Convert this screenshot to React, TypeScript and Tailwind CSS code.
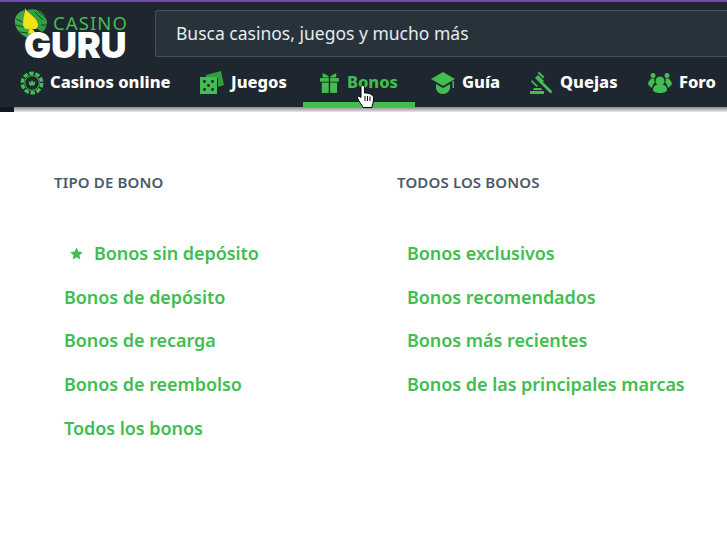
const left = ['Bonos de depósito', 'Bonos de recarga', 'Bonos de reembolso', 'Todos los bonos'];
const right = ['Bonos exclusivos', 'Bonos recomendados', 'Bonos más recientes', 'Bonos de las principales marcas'];

function Logo() {
  return (
    <div className="relative w-[128px] h-[56px] shrink-0">
      <svg className="absolute left-[2px] top-[-2px]" width="36" height="34" viewBox="0 0 36 34">
        <path d="M13 2 C22 -1 32 4 33 14 C33 19 31 22 28 24 L22 20 Z" fill="#2f9e3e" />
        <path d="M21 4 L29 12 M24 3 L32 10 M27 17 L33 17" stroke="#1e262f" strokeWidth="0.8" />
        <path d="M10 2 C4 4 0 9 1 15 C2 23 8 28 16 31 L18 22 L12 10 Z" fill="#3aa949" />
        <path d="M2 11 L11 15 M2 17 L13 20 M5 24 L14 25" stroke="#1e262f" strokeWidth="0.8" />
        <path d="M11 0 C13 5 24 10 24 17 C24 21 20 22 18 20.500 L22 25.500 L14 25.500 L15.500 20.500 C12 22 9 20 9 16 C9 10 11 6 11 0 Z" fill="#f1e317" />
      </svg>
      <span className="absolute left-[41px] top-[6px] text-[18.500px] leading-[14px] tracking-[1.100px] text-[#42bd4f]">CASINO</span>
      <span className="absolute left-[12px] top-[22px] text-[36px] leading-[26px] font-black tracking-[-0.200px] text-white font-['Inter',sans-serif]">GURU</span>
    </div>
  );
}

function Chip() {
  return (
    <svg className="-mr-[1px]" width="24" height="24" viewBox="0 0 24 24">
      <circle cx="12" cy="12" r="9.800" fill="none" stroke="#42bd4f" strokeWidth="3.400" strokeDasharray="4.500 1.660" />
      <circle cx="12" cy="12" r="7.300" fill="#1e262f" stroke="#42bd4f" strokeWidth="1" />
      <path d="M8.500 10 L10.500 11.500 L12 9 L13.500 11.500 L15.500 10 L14.500 14.500 L9.500 14.500 Z" fill="#42bd4f" />
    </svg>
  );
}

function Dice() {
  return (
    <svg width="24" height="24" viewBox="0 0 24 24">
      <path d="M6 4 L21 0 L24 14 L18 16 L18 7 L6 7 Z" fill="#2f9e3e" />
      <rect x="0" y="6" width="17" height="17" fill="#42bd4f" />
      <circle cx="4.500" cy="10.500" r="1.400" fill="#1e262f" />
      <circle cx="12.500" cy="10.500" r="1.400" fill="#1e262f" />
      <circle cx="8.500" cy="14.500" r="1.400" fill="#1e262f" />
      <circle cx="4.500" cy="18.500" r="1.400" fill="#1e262f" />
      <circle cx="12.500" cy="18.500" r="1.400" fill="#1e262f" />
    </svg>
  );
}

function GiftIcon() {
  return (
    <svg className="mr-[1px]" width="21" height="22" viewBox="0 0 21 22" fill="#42bd4f">
      <path d="M3 0 L9.500 3.500 L9.500 5 L3 5 Z" />
      <path d="M18 0 L11.500 3.500 L11.500 5 L18 5 Z" />
      <rect x="0" y="5.500" width="9.700" height="4" />
      <rect x="11.300" y="5.500" width="9.700" height="4" />
      <rect x="2" y="10.500" width="7.700" height="11.500" />
      <rect x="11.300" y="10.500" width="7.700" height="11.500" />
    </svg>
  );
}

function CapIcon() {
  return (
    <svg width="24" height="22" viewBox="0 0 24 22" fill="#42bd4f">
      <path d="M12 0 L24 7 L12 14 L0 7 Z" />
      <path d="M5 12 L12 16 L19 12 L19 17 C18 20 15 22 12 22 C9 22 6 20 5 17 Z" />
      <rect x="21.500" y="9" width="1.500" height="7" />
    </svg>
  );
}

function GavelIcon() {
  return (
    <svg width="24" height="24" viewBox="0 0 24 24" fill="#42bd4f">
      <path d="M7 5 L13 11 L10 14 L4 8 Z" transform="translate(2 -1)" />
      <path d="M9 1.500 L14.500 7 L13 8.500 L7.500 3 Z" transform="translate(1 -1)" />
      <path d="M3 9 L9 15 L7.500 16 L2 10.500 Z" />
      <path d="M13 10 L23.500 20.500 L21.500 22.500 L11 12 Z" />
      <path d="M4 19 C4 17.500 5 17 6.500 17 L10.500 17 C12 17 13 17.500 13 19 Z" />
      <rect x="1" y="20" width="14" height="3" />
    </svg>
  );
}

function Users() {
  return (
    <svg width="24" height="24" viewBox="0 0 24 24" fill="#42bd4f">
      <circle cx="12" cy="10" r="4.500" />
      <path d="M5 19 C5 14.500 8 13.500 12 13.500 C16 13.500 19 14.500 19 19 C19 23 5 23 5 19 Z" />
      <circle cx="5" cy="4.500" r="2.500" />
      <circle cx="19" cy="4.500" r="2.500" />
      <path d="M3.500 7.500 C1 9.500 -0.500 12 0.500 14 L4 17 C4.500 14 5.500 12.500 7 11.500 C6 10 6 8.500 6.500 7.500 Z" />
      <path d="M20.500 7.500 C23 9.500 24.500 12 23.500 14 L20 17 C19.500 14 18.500 12.500 17 11.500 C18 10 18 8.500 17.500 7.500 Z" />
    </svg>
  );
}

function Cursor() {
  return (
    <svg className="absolute left-[357px] top-[85px]" width="17" height="23" viewBox="0 0 17 23">
      <path d="M4 2 C4 0 7.500 0 7.500 2 L7.500 8 L10 8 L12.500 8.500 L15 10 C16.500 11 16.500 12 16.500 14 C16.500 17 15.500 19 15 22.500 L6 22.500 C5 20 2 17 0.500 13 C0 11 2 10.500 4 12.500 Z" fill="white" stroke="black" strokeWidth="1" />
      <path d="M8 11 V16 M10.500 11 V16 M13 11.500 V16" stroke="black" strokeWidth="1" />
    </svg>
  );
}

function NavItem({ icon, label, active, className }: { icon: React.ReactNode; label: string; active?: boolean; className: string }) {
  return (
    <div className={`flex items-center gap-[7px] h-full border-b-[5px] pt-[7px] ${active ? 'border-[#42bd4f] text-[#42bd4f]' : 'border-transparent text-white'} ${className}`}>
      {icon}
      <span className="text-[16.500px] font-extrabold whitespace-nowrap">{label}</span>
    </div>
  );
}

function LinkRow({ label }: { label: string }) {
  return <div className="h-[43.700px] text-[18px] font-semibold leading-[24px] tracking-[-0.05px] text-[#42bd4f] whitespace-nowrap">{label}</div>;
}

export default function App() {
  return (
    <div className="relative h-[550px] w-[727px] overflow-hidden bg-white font-['Noto_Sans',sans-serif]">
      <div className="h-[2px] bg-[#7048b8]" />
      <header className="bg-[#1e262f] h-[105px]">
        <div className="flex h-[54px] pl-[12px] pt-[8px]">
          <Logo />
          <div className="ml-[15px] h-[47px] flex-1 rounded-l-[3px] border border-r-0 border-[#465159] bg-[#28323b] pl-[20px] flex items-center text-[17.500px] text-[#e6ebef]">
            Busca casinos, juegos y mucho más
          </div>
        </div>
        <nav className="flex h-[51px] items-stretch pl-[20px]">
          <NavItem className="w-[180px]" label="Casinos online" icon={<Chip />} />
          <NavItem className="w-[103px]" label="Juegos" icon={<Dice />} />
          <NavItem active className="w-[112px] px-[17px]" label="Bonos" icon={<GiftIcon />} />
          <NavItem className="w-[98px] ml-[16px]" label="Guía" icon={<CapIcon />} />
          <NavItem className="w-[119px]" label="Quejas" icon={<GavelIcon />} />
          <NavItem className="" label="Foro" icon={<Users />} />
        </nav>
      </header>
      <div className="flex h-[5px]">
        <div className="w-[14px] bg-[#10171e]" />
        <div className="flex-1 bg-gradient-to-b from-[#8a8a8a] to-[#e8e8e8]" />
      </div>
      <main className="flex pt-[58px] pl-[54px]">
        <section className="w-[343px]">
          <h3 className="text-[15px] font-semibold leading-[24px] tracking-[0.15px] text-[#4a5a6a]">TIPO DE BONO</h3>
          <div className="mt-[47px] pl-[10px]">
            <div className="flex h-[43.700px] items-start text-[18px] font-semibold leading-[24px] tracking-[-0.05px] text-[#42bd4f]">
              <svg className="ml-[6px] mr-[11px] mt-[6px]" width="13" height="13" viewBox="0 0 24 24" fill="#42bd4f">
                <path d="M12 1 L15.500 8.500 L23.500 9.500 L17.500 15 L19 23 L12 19 L5 23 L6.500 15 L0.500 9.500 L8.500 8.500 Z" />
              </svg>
              Bonos sin depósito
            </div>
            {left.map((l) => <LinkRow key={l} label={l} />)}
          </div>
        </section>
        <section>
          <h3 className="text-[15px] font-semibold leading-[24px] tracking-[0.15px] text-[#4a5a6a]">TODOS LOS BONOS</h3>
          <div className="mt-[47px] pl-[10px]">
            {right.map((l) => <LinkRow key={l} label={l} />)}
          </div>
        </section>
      </main>
      <Cursor />
    </div>
  );
}
